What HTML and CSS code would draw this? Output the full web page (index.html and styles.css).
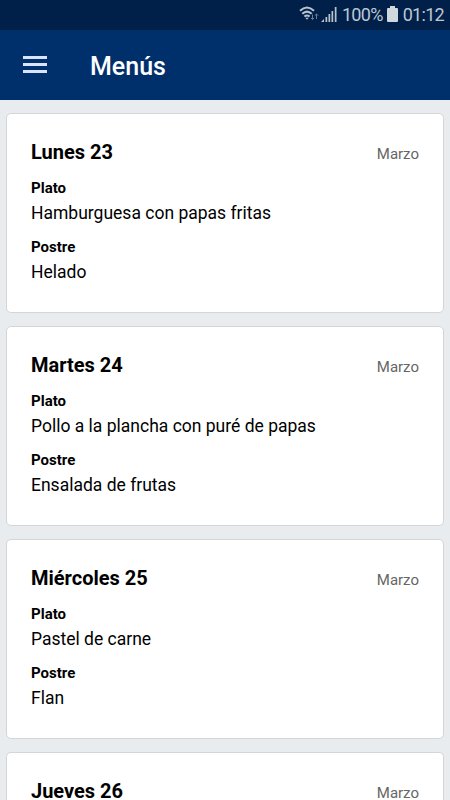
FILE: index.html
```html
<!DOCTYPE html>
<html lang="es">
<head>
  <meta charset="UTF-8">
  <meta name="viewport" content="width=device-width, initial-scale=1.0">
  <title>Menús</title>
  <link rel="stylesheet" href="styles.css">
</head>
<body>
  <div class="status-bar">
    <svg class="wifi" width="21" height="16" viewBox="0 0 21 16" fill="none" stroke="#b9c3cf">
      <path d="M1 4.8Q8 -1.8 15 4.8M3.3 7.8Q8 3.4 12.7 7.8M5.4 10.6Q8 8.4 10.6 10.6" stroke-width="2"/>
      <path d="M6.3 11.8L8 13.8L9.7 11.8Z" fill="#b9c3cf" stroke="none"/>
      <path d="M13.5 8.5v5M11.9 11.9l1.6 1.6 1.6-1.6M17.5 13v-5M15.9 9.6L17.5 8l1.6 1.6" stroke="#6b7d94"/>
    </svg>
    <svg class="signal" width="16" height="15" viewBox="0 0 16 15" fill="#b9c3cf">
      <path d="M0 15l3-3v3zM4.5 10h1.7v5H4.5zM7.5 7h1.7v8H7.5zM10.5 4h1.7v11h-1.7zM13.8 0h1.7v15h-1.7z"/>
    </svg>
    <span class="percent">100%</span>
    <svg class="battery" width="11" height="16" viewBox="0 0 11 16" fill="#d0d7dd">
      <path d="M3 0h5v2h2q1 0 1 1v12q0 1-1 1H1q-1 0-1-1V3q0-1 1-1h2z"/>
    </svg>
    <span class="clock">01:12</span>
  </div>
  <header class="toolbar">
    <svg class="menu-icon" width="24" height="18" viewBox="0 0 24 18" fill="#d9e4fa">
      <path d="M0 0h24v3H0zM0 7h24v3H0zM0 14h24v3H0z"/>
    </svg>
    <h1>Menús</h1>
  </header>
  <main class="menu-list">
    <article class="card">
      <div class="card-header"><h2>Lunes 23</h2><span class="month">Marzo</span></div>
      <h3>Plato</h3>
      <p>Hamburguesa con papas fritas</p>
      <h3>Postre</h3>
      <p>Helado</p>
    </article>
    <article class="card">
      <div class="card-header"><h2>Martes 24</h2><span class="month">Marzo</span></div>
      <h3>Plato</h3>
      <p>Pollo a la plancha con puré de papas</p>
      <h3>Postre</h3>
      <p>Ensalada de frutas</p>
    </article>
    <article class="card">
      <div class="card-header"><h2>Miércoles 25</h2><span class="month">Marzo</span></div>
      <h3>Plato</h3>
      <p>Pastel de carne</p>
      <h3>Postre</h3>
      <p>Flan</p>
    </article>
    <article class="card">
      <div class="card-header"><h2>Jueves 26</h2><span class="month">Marzo</span></div>
    </article>
  </main>
</body>
</html>
```

FILE: styles.css
```css
* {
  box-sizing: border-box;
}

body {
  margin: 0;
  height: 100vh;
  overflow: hidden;
  display: flex;
  flex-direction: column;
  background: #e9ecef;
  font-family: Roboto, sans-serif;
  color: #000;
}

h1, h2, h3, p {
  margin: 0;
}

.status-bar {
  flex: none;
  height: 30px;
  padding: 0 6px 2px 0;
  display: flex;
  align-items: center;
  justify-content: flex-end;
  background: #00204a;
  color: #bdc8d3;
  font-size: 18px;
  letter-spacing: -0.7px;
}

.signal {
  margin-left: 1px;
}

.percent {
  margin: 0 4px 0 5px;
}

.clock {
  margin-left: 5px;
}

.toolbar {
  flex: none;
  height: 70px;
  padding-left: 23px;
  display: flex;
  align-items: center;
  gap: 43px;
  background: #00306c;
  color: #fff;
}

.toolbar h1 {
  padding-top: 4px;
  font-size: 25px;
  font-weight: 500;
  line-height: 30px;
}

.menu-list {
  flex: 1;
  min-height: 0;
  overflow: hidden;
  padding: 13px 6px 0;
  display: flex;
  flex-direction: column;
  gap: 13px;
}

.card {
  flex: none;
  height: 200px;
  padding: 24px 24px 0;
  background: #fff;
  border: 1px solid #d3d6d9;
  border-radius: 5px;
}

.card:last-child {
  flex: 1;
  min-height: 0;
  height: auto;
  border-bottom: none;
  border-radius: 5px 5px 0 0;
}

.card-header {
  display: flex;
  justify-content: space-between;
  align-items: baseline;
  margin-bottom: 10px;
}

.card h2 {
  font-size: 20px;
  font-weight: 700;
  line-height: 28px;
}

.month {
  font-size: 15px;
  color: #666;
}

.card h3 {
  font-size: 15px;
  font-weight: 700;
  line-height: 24px;
}

.card p {
  margin-bottom: 8px;
  font-size: 17.5px;
  line-height: 27px;
}
```
